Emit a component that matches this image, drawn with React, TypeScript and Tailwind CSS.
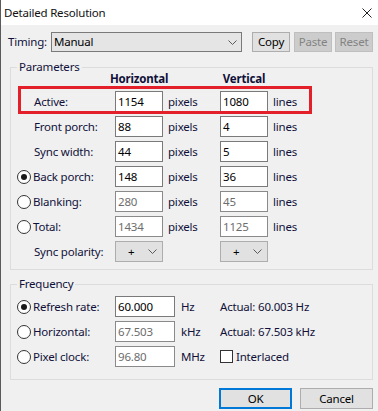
import React from "react";

const Chevron = () => (
    <svg width="9" height="5" viewBox="0 0 9 5" className="shrink-0">
        <polyline points="0.5,0.5 4.5,4.5 8.5,0.5" fill="none" stroke="#5a5a5a" strokeWidth="1" />
    </svg>
);

const Radio: React.FC<{ on?: boolean }> = ({ on }) => (
    <span className="mr-[2px] flex h-[14px] w-[14px] shrink-0 items-center justify-center rounded-full border border-[#333333] bg-white">
        {on && <span className="h-[6px] w-[6px] rounded-full bg-[#1a1a1a]" />}
    </span>
);

const Field: React.FC<{ value: string; w: string; disabled?: boolean }> = ({ value, w, disabled }) => (
    <div
        className={`flex h-[21px] shrink-0 items-center border bg-white pl-[2px] ${w} ${
            disabled ? "border-[#8a8a8a] text-[#6d6d6d]" : "border-[#7a7a7a] text-black"
        }`}
    >
        {value}
    </div>
);

const Polarity = () => (
    <div className="flex h-[21px] w-[48px] shrink-0 items-center justify-between border border-[#adadad] bg-[#e1e1e1] pl-[12px] pr-[5px] text-black">
        <span>+</span>
        <Chevron />
    </div>
);

type Row = { label: string; radio?: "on" | "off"; h: string; v: string; disabled?: boolean };

const rows: Row[] = [
    { label: "Front porch:", h: "88", v: "4" },
    { label: "Sync width:", h: "44", v: "5" },
    { label: "Back porch:", radio: "on", h: "148", v: "36" },
    { label: "Blanking:", radio: "off", h: "280", v: "45", disabled: true },
    { label: "Total:", radio: "off", h: "1434", v: "1125", disabled: true },
];

const Label: React.FC<{ text: string; radio?: "on" | "off" }> = ({ text, radio }) => (
    <div className={`flex w-[98px] shrink-0 items-center ${radio ? "" : "pl-[17px]"}`}>
        {radio && <Radio on={radio === "on"} />}
        <span className="whitespace-nowrap">{text}</span>
    </div>
);

const ParamRow: React.FC<Row> = ({ label, radio, h, v, disabled }) => (
    <div className="flex h-[21px] items-center">
        <Label text={label} radio={radio} />
        <Field value={h} w="w-[48px]" disabled={disabled} />
        <span className="w-[57px] shrink-0 pl-[5px]">pixels</span>
        <Field value={v} w="w-[48px]" disabled={disabled} />
        <span className="pl-[5px]">lines</span>
    </div>
);

const FreqRow: React.FC<{ label: string; on?: boolean; value: string; unit: string; children: React.ReactNode }> = ({
    label,
    on,
    value,
    unit,
    children,
}) => (
    <div className="flex h-[21px] items-center">
        <Label text={label} radio={on ? "on" : "off"} />
        <Field value={value} w="w-[60px]" disabled={!on} />
        <span className="w-[45px] shrink-0 pl-[6px]">{unit}</span>
        {children}
    </div>
);

export default function App() {
    return (
        <div className="h-[411px] w-[378px] overflow-hidden border-l border-[#5a5a5a] bg-[#f0f0f0] font-['Noto_Sans',sans-serif] text-[11.5px] leading-[16px] tracking-[-0.2px] text-[#10103a]">
            <div className="flex h-[25px] items-center justify-between bg-white pl-[3px] pr-[6px]">
                <span className="text-[#111]">Detailed Resolution</span>
                <svg width="10" height="10" viewBox="0 0 10 10">
                    <path d="M0.5 0.5 L9.5 9.5 M9.5 0.5 L0.5 9.5" stroke="#222" strokeWidth="1" />
                </svg>
            </div>

            <div className="pl-[9px] pr-[5px] pt-[7px]">
                <div className="-ml-[2px] flex h-[20px] items-center">
                    <span className="shrink-0">Timing:</span>
                    <div className="ml-[4px] flex h-[20px] min-w-0 flex-1 items-center justify-between border border-[#7a7a7a] bg-[#e5e5e5] pl-[2px] pr-[4px] text-black">
                        <span>Manual</span>
                        <Chevron />
                    </div>
                    <button className="ml-[10px] h-[20px] w-[38px] shrink-0 border border-[#adadad] bg-[#e1e1e1] text-black">Copy</button>
                    <button className="ml-[4px] h-[20px] w-[38px] shrink-0 border border-[#bfbfbf] bg-[#cccccc] text-[#838383]">Paste</button>
                    <button className="ml-[3px] h-[20px] w-[38px] shrink-0 border border-[#bfbfbf] bg-[#cccccc] text-[#838383]">Reset</button>
                </div>

                <fieldset className="mt-[8px] border border-[#dcdcdc] pb-[7px] pl-[6px] pr-[6px]">
                    <legend className="px-[2px] leading-[14px]">Parameters</legend>
                    <div className="-mt-[2px] flex h-[14px] items-center font-bold leading-[14px]">
                        <span className="w-[98px] shrink-0" />
                        <span className="flex w-[48px] shrink-0 justify-center whitespace-nowrap">Horizontal</span>
                        <span className="w-[57px] shrink-0" />
                        <span className="flex w-[48px] shrink-0 justify-center whitespace-nowrap">Vertical</span>
                    </div>
                    <div className="mt-[5px] flex flex-col gap-[4px]">
                        <div className="relative">
                            <ParamRow label="Active:" h="1154" v="1080" />
                            <div className="pointer-events-none absolute -top-[5px] left-[1px] h-[28px] w-[294px] border-[3px] border-[#e3202a]" />
                        </div>
                        {rows.map((r) => (
                            <ParamRow key={r.label} {...r} />
                        ))}
                        <div className="flex h-[21px] items-center">
                            <Label text="Sync polarity:" />
                            <Polarity />
                            <span className="w-[57px] shrink-0" />
                            <Polarity />
                        </div>
                    </div>
                </fieldset>

                <fieldset className="mt-[7px] border border-[#dcdcdc] pb-[12px] pl-[6px] pr-[6px] pt-[5px]">
                    <legend className="px-[2px] leading-[14px]">Frequency</legend>
                    <div className="flex flex-col gap-[4px]">
                        <FreqRow label="Refresh rate:" on value="60.000" unit="Hz">
                            <span>Actual: 60.003 Hz</span>
                        </FreqRow>
                        <FreqRow label="Horizontal:" value="67.503" unit="kHz">
                            <span>Actual: 67.503 kHz</span>
                        </FreqRow>
                        <FreqRow label="Pixel clock:" value="96.80" unit="MHz">
                            <span className="flex items-center">
                                <span className="mr-[3px] h-[13px] w-[13px] border border-[#333333] bg-white" />
                                Interlaced
                            </span>
                        </FreqRow>
                    </div>
                </fieldset>

                <div className="mt-[8px] flex justify-end">
                    <button className="h-[21px] w-[73px] border-2 border-[#0078d7] bg-[#e1e1e1] text-black">OK</button>
                    <button className="ml-[8px] h-[21px] w-[73px] border border-[#adadad] bg-[#e1e1e1] text-black">Cancel</button>
                </div>
            </div>
        </div>
    );
}
